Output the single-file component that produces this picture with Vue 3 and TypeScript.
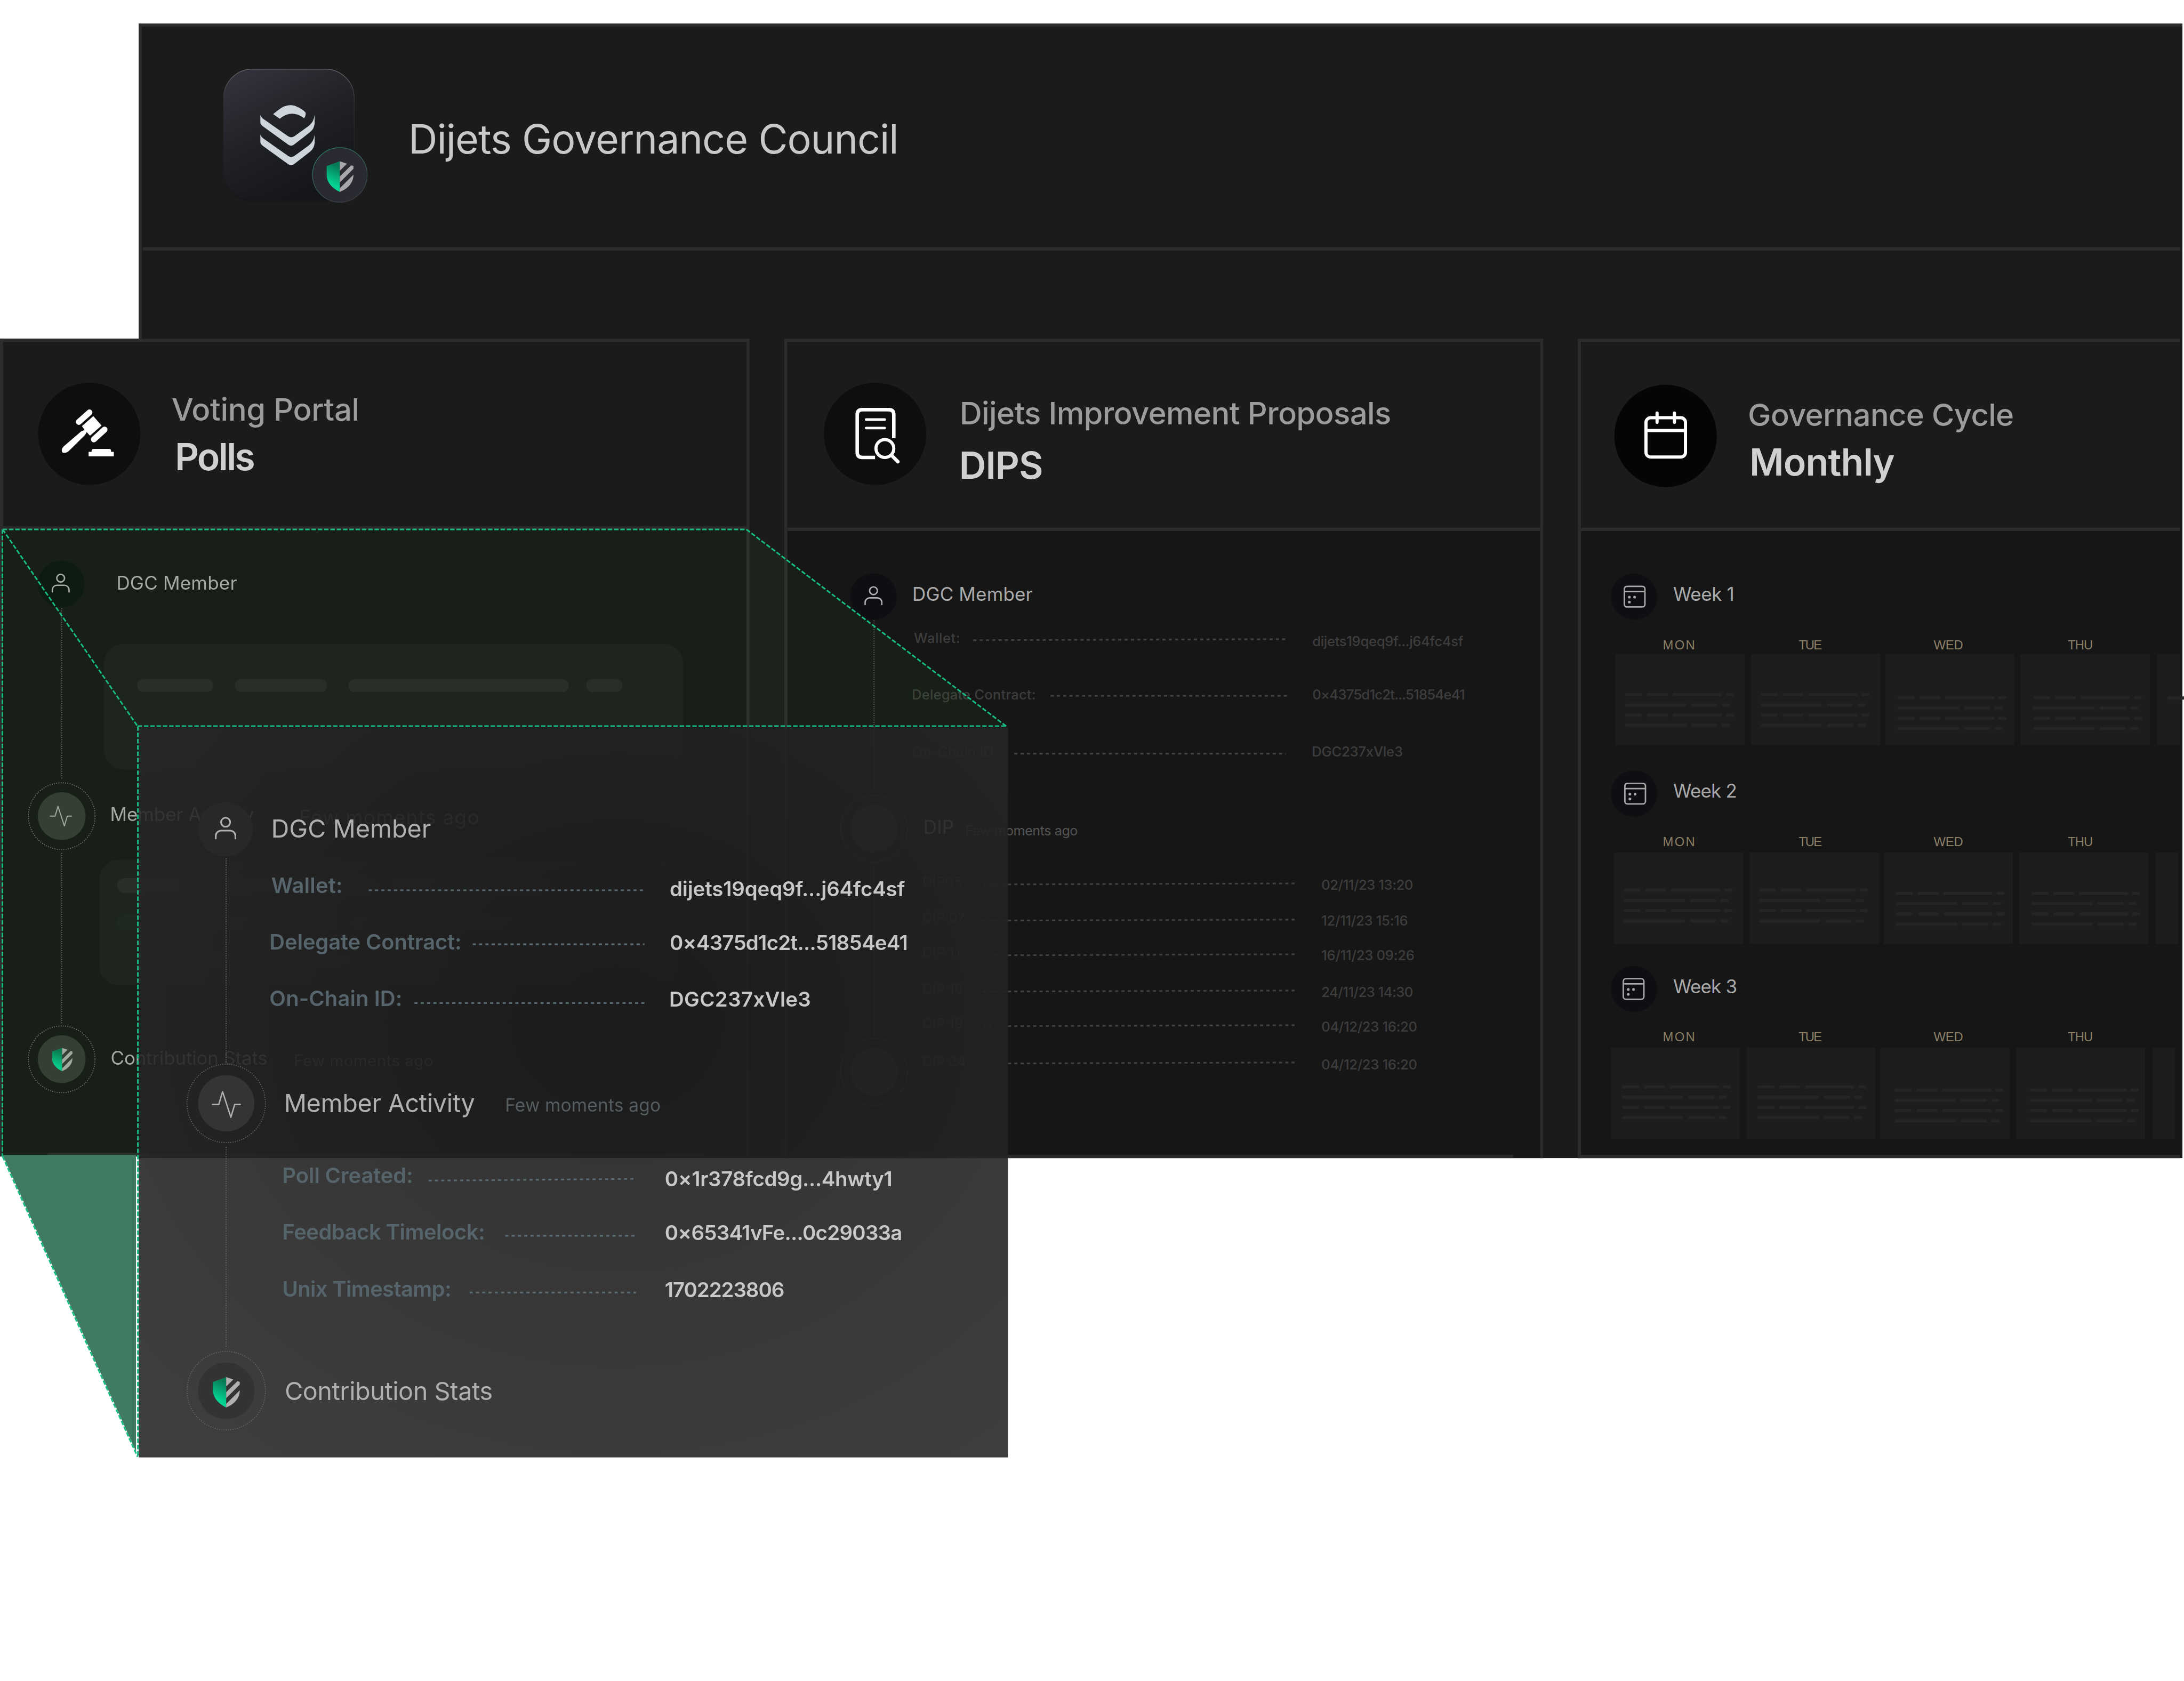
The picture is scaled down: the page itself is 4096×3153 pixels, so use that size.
<script setup lang="ts">
type Fit = HTMLElement

// Spaces the letters of a label so that its drawn width equals the bound value.
const pen = document.createElement('canvas').getContext('2d')!
function fit(el: Fit, width: number) {
  const css = getComputedStyle(el)
  pen.font = `${css.fontWeight} ${css.fontSize} ${css.fontFamily}`
  const text = (el.textContent ?? '').trim()
  const m = pen.measureText(text)
  const ink = m.actualBoundingBoxLeft + m.actualBoundingBoxRight
  el.style.letterSpacing = `${(width - ink) / Math.max(1, text.length - 1)}px`
  el.style.textIndent = `${m.actualBoundingBoxLeft}px`
}
const vFit = {
  mounted: (el: Fit, b: { value: number }) => fit(el, b.value),
}

interface Row {
  h: number
  x: number
  label: string
  w: number
  head?: boolean
  dotX?: number
  dotW?: number
  dotUp?: number
  rise?: number
  gap?: number
  value?: string
  vw?: number
  drop?: number
  note?: string
  noteX?: number
  noteW?: number
}

const proposals: Row[] = [
  { h: 80.3, x: 2, label: 'DGC Member', w: 225.6, head: true },
  { h: 108.6, x: 2, label: 'Wallet:', w: 86, dotX: 114.7, dotW: 599.8, dotUp: 5, rise: 2, gap: 47, value: 'dijets19qeq9f...j64fc4sf', vw: 286.6, drop: 6 },
  { h: 107.4, x: 0, label: 'Delegate Contract:', w: 232, dotX: 262, dotW: 455, dotUp: 8, rise: 0, gap: 44.5, value: '0×4375d1c2t...51854e41', vw: 288, drop: 0 },
  { h: 147.6, x: 0, label: 'On-Chain ID:', w: 159.7, dotX: 193, dotW: 518, dotUp: 5, rise: 0, gap: 50.5, value: 'DGC237xVle3', vw: 170, drop: 0 },
  { h: 101.4, x: 23, label: 'DIP', w: 53.5, head: true, note: 'Few moments ago', noteX: 102, noteW: 210.7 },
  { h: 68, x: 20, label: 'DIP05:', w: 81, dotX: 133, dotW: 599.7, dotUp: 5, rise: 2, gap: 46, value: '02/11/23 13:20', vw: 173, drop: 6 },
  { h: 66, x: 20, label: 'DIP 07:', w: 85, dotX: 133, dotW: 599.7, dotUp: 4, rise: 2, gap: 46, value: '12/11/23 15:16', vw: 162.5, drop: 6 },
  { h: 70, x: 20, label: 'DIP 11:', w: 76.6, dotX: 133, dotW: 599.7, dotUp: 4, rise: 2, gap: 46, value: '16/11/23 09:26', vw: 175, drop: 6 },
  { h: 66, x: 20, label: 'DIP 16:', w: 82, dotX: 133, dotW: 599.7, dotUp: 5, rise: 2, gap: 46, value: '24/11/23 14:30', vw: 173, drop: 6 },
  { h: 71.5, x: 20, label: 'DIP 19:', w: 82, dotX: 133, dotW: 599.7, dotUp: 5, rise: 2, gap: 46, value: '04/12/23 16:20', vw: 180.8, drop: 6 },
  { h: 60, x: 20, label: 'DIP 24:', w: 87, dotX: 133, dotW: 599.7, dotUp: 5, rise: 2, gap: 46, value: '04/12/23 16:20', vw: 180.8, drop: 6 },
]

const details: Row[] = [
  { h: 107, x: 20.2, label: 'DGC Member', w: 299.6, head: true },
  { h: 107.7, x: 16.5, label: 'Wallet:', w: 133, dotX: 202, dotW: 524, dotUp: 6.5, rise: 0, gap: 50, value: 'dijets19qeq9f...j64fc4sf', vw: 447, drop: 5 },
  { h: 108, x: 15, label: 'Delegate Contract:', w: 361, dotX: 400, dotW: 326, dotUp: 10.5, rise: 0, gap: 50, value: '0×4375d1c2t...51854e41', vw: 450, drop: 0 },
  { h: 200.8, x: 15, label: 'On-Chain ID:', w: 248, dotX: 289, dotW: 437, dotUp: 7, rise: 0, gap: 50, value: 'DGC237xVle3', vw: 266, drop: 0 },
  { h: 136.2, x: 44.7, label: 'Member Activity', w: 359, head: true, note: 'Few moments ago', noteX: 463.5, noteW: 293 },
  { h: 107.3, x: 39.5, label: 'Poll Created:', w: 244, dotX: 316, dotW: 394, dotUp: 5.5, rise: 3.4, gap: 56.6, value: '0×1r378fcd9g...4hwty1', vw: 430, drop: 5 },
  { h: 108.7, x: 39.5, label: 'Feedback Timelock:', w: 381, dotX: 462, dotW: 248, dotUp: 7.5, rise: 0, gap: 56.6, value: '0×65341vFe...0c29033a', vw: 449, drop: 0 },
  { h: 195.3, x: 39.5, label: 'Unix Timestamp:', w: 317, dotX: 394, dotW: 316, dotUp: 8.5, rise: 0, gap: 56.6, value: '1702223806', vw: 225, drop: 0 },
  { h: 80, x: 44, label: 'Contribution Stats', w: 392, head: true },
]

const days = [
  { name: 'MON', at: 155.8, w: 61 },
  { name: 'TUE', at: 414.3, w: 44.5 },
  { name: 'WED', at: 671.4, w: 56 },
  { name: 'THU', at: 926.7, w: 48 },
]

const weeks = [
  { name: 'Week 1', w: 114, h: 375, icon: 1, left: 66, gap: 8.8, pad: 18, pad2: 24, bar: 77.6, last: true },
  { name: 'Week 2', w: 120, h: 372, icon: 2, left: 63, gap: 11.8, pad: 18, pad2: 23.5, bar: 72, last: false },
  { name: 'Week 3', w: 120, h: 340, icon: -1, left: 57, gap: 12, pad: 21, pad2: 27, bar: 74.6, last: false },
]
const cells = [0, 258, 513, 771, 1031]
const barRows = [0, 19.5, 39, 58.5]
const longBars = [[0, 32.5], [41.4, 40], [90.2, 94], [191.6, 15.5]]
const shortBars = [[0, 117], [126, 50], [184, 15.8]]
</script>

<template>
  <div class="viewport">
    <div class="stage">
      <svg width="0" height="0" class="defs">
        <defs>
          <linearGradient id="mint" x1=".6" y1="0" x2=".4" y2="1">
            <stop offset="0.1" stop-color="#067a55" />
            <stop offset=".75" stop-color="#05d394" />
          </linearGradient>
          <symbol id="shield" viewBox="665 591 154 175">
            <path fill="url(#mint)" d="M741 591 665 619V672C668 715 700 748 741 766Z" />
            <path fill="currentColor" d="M741 591 782 605 741 645ZM741 678 806 614 819 619V634L741 712ZM741 745 819 667C819 715 785 748 741 766Z" />
          </symbol>
          <symbol id="person" viewBox="0 0 36 38">
            <g fill="none" stroke="currentColor" stroke-width="2.8" stroke-linecap="round">
              <circle cx="18" cy="9" r="7.6" />
              <path d="M1.6 36V31.5A9 9 0 0 1 10.6 23 H25.4A9 9 0 0 1 34.4 31.5V36" />
            </g>
          </symbol>
          <symbol id="pulse" viewBox="0 0 166 158">
            <path d="M3 79H39L61 5 109 153 131 79H163" fill="none" stroke="currentColor" stroke-width="8" stroke-linecap="round" stroke-linejoin="round" />
          </symbol>
        </defs>
      </svg>

      <div class="backdrop"></div>

      <header class="masthead">
        <svg class="logo" width="320" height="300" viewBox="0 0 960 900">
          <defs>
            <linearGradient id="tile" x1=".1" y1="0" x2=".6" y2="1">
              <stop offset="0" stop-color="#33333d" />
              <stop offset=".5" stop-color="#212226" />
              <stop offset="1" stop-color="#14151a" />
            </linearGradient>
            <linearGradient id="rim" x1="0" y1="0" x2="0" y2="1">
              <stop offset="0" stop-color="#68686c" />
              <stop offset=".25" stop-color="#2d2d33" />
              <stop offset="1" stop-color="#16171b" />
            </linearGradient>
            <linearGradient id="ring" x1=".2" y1="0" x2=".7" y2="1">
              <stop offset="0" stop-color="#2e7f68" />
              <stop offset="1" stop-color="#3a3b40" />
            </linearGradient>
          </defs>
          <rect x="76" y="70" width="748" height="750" rx="165" fill="#171717" />
          <rect x="77" y="65" width="746" height="748" rx="165" fill="url(#tile)" stroke="url(#rim)" stroke-width="4" />
          <path fill="#ced5db" d="M360 322 398 348Q466 292 537 345 546 335 546 316 540 302 505 284 463 259 414 282 400 289 360 322Z" />
          <path id="chevron" fill="#ced5db" d="M287 325Q290 340 304 349L448 450Q463 459 479 450L562 390Q592 368 597 326V376Q594 406 572 424L478 497Q463 507 447 497L300 390Q287 380 287 368Z" />
          <use href="#chevron" y="112" />
          <circle cx="741" cy="669" r="156" fill="#2a2a32" stroke="url(#ring)" stroke-width="4" />
          <use href="#shield" class="badge-mark" x="665" y="591" width="154" height="175" />
        </svg>
        <h1 class="t title"><span v-fit="922">Dijets Governance Council</span></h1>
      </header>

      <main class="columns">
        <section class="column polls">
          <div class="top">
            <svg class="disc" width="196" height="196" viewBox="64 84 588 588">
              <circle cx="358" cy="378" r="292" fill="#0e0e0e" />
              <g stroke="#fff" stroke-width="34" stroke-linecap="round">
                <path d="M298 310 359 256M384 410 445 354" />
              </g>
              <path fill="#fff" d="M316 334 381 277 428 331 362 389 343 368 334 384 240 477Q230 486 222 486H208Q200 484 201 468 202 460 212 450L312 364 331 356ZM354 481H371V474Q372 464 384 464H470Q482 464 482 474V481H498V507H354Z" />
            </svg>
            <div class="names">
              <p class="t kind"><span v-fit="353">Voting Portal</span></p>
              <p class="t name"><span v-fit="146">Polls</span></p>
            </div>
          </div>
          <div class="body">
            <svg class="rail" width="183" height="1180" viewBox="6 1008 183 1180">
              <g class="dotted">
                <path d="M117.5 1158V1485M117.5 1624V1950" />
                <circle cx="117.5" cy="1554" r="63.5" />
                <circle cx="117.5" cy="2017" r="63.5" />
              </g>
              <circle cx="116.5" cy="1112" r="44.3" fill="#0b110f" />
              <use href="#person" x="98" y="1088" width="35" height="45" class="mark" preserveAspectRatio="none" />
              <circle cx="117.5" cy="1554" r="45.5" fill="#363a37" />
              <use href="#pulse" x="94.5" y="1534" width="43" height="40" class="mark" />
              <circle cx="117.5" cy="2016.7" r="45.5" fill="#363a37" />
              <use href="#shield" x="99" y="1995" width="39" height="45" class="mark" />
            </svg>
            <div class="feed">
              <div class="line l1"><span class="t small x1"><span v-fit="226.3">DGC Member</span></span></div>
              <div class="card c1">
                <div class="pills">
                  <i class="p145"></i><i class="p175"></i><i class="p420"></i><i class="p70"></i>
                </div>
              </div>
              <div class="line l2">
                <span class="t small x2"><span v-fit="270">Member Activity</span></span>
                <span class="t ago big"><span v-fit="338">Few moments ago</span></span>
              </div>
              <div class="card c2">
                <div class="pills"><i class="q122"></i><i class="q350"></i><i class="q300"></i></div>
                <div class="pills dim"><i class="q420"></i><i class="q120"></i><i class="q330"></i></div>
                <div class="pills dim shifted"><i class="q142"></i><i class="q240"></i><i class="q125"></i></div>
              </div>
              <div class="line l3">
                <span class="t small x2"><span v-fit="295">Contribution Stats</span></span>
                <span class="t ago"><span v-fit="262">Few moments ago</span></span>
              </div>
            </div>
          </div>
        </section>

        <section class="column dips">
          <div class="top">
            <svg class="disc" width="196" height="196" viewBox="52 55 588 588">
              <circle cx="346" cy="349" r="292" fill="#0e0e0e" />
              <g fill="none" stroke="#fff">
                <path stroke-width="20" d="M453 374V240Q453 211 424 211H273Q244 211 244 240V455Q244 484 273 484H346" />
                <path stroke-width="15" stroke-linecap="round" d="M295 268H401M295 316H401" />
                <circle stroke-width="18" cx="402" cy="433" r="51" />
                <path stroke-width="20" stroke-linecap="round" d="M442 474 476 508" />
              </g>
            </svg>
            <div class="names">
              <p class="t kind"><span v-fit="816">Dijets Improvement Proposals</span></p>
              <p class="t name"><span v-fit="152">DIPS</span></p>
            </div>
          </div>
          <div class="body">
            <svg class="rail" width="239" height="1180" viewBox="1499 1011 239 1180">
              <g class="dotted">
                <path d="M1664 1181V1506M1664 1649V1972" />
                <circle cx="1664" cy="1577.8" r="63.5" />
                <circle cx="1664" cy="2040.8" r="63.5" />
              </g>
              <circle cx="1663" cy="1136" r="44.3" fill="#0d0f12" />
              <use href="#person" x="1645.5" y="1112" width="35" height="45" class="mark" preserveAspectRatio="none" />
              <circle cx="1664" cy="1577.8" r="45.5" fill="#323436" />
              <circle cx="1664" cy="2040.8" r="45.5" fill="#323436" />
            </svg>
            <div class="rows">
              <div v-for="r in proposals" :key="r.label" class="row" :style="{ height: r.h + 'px', paddingLeft: r.x + 'px' }">
                <span class="t label" :class="{ head: r.head }" :style="{ width: (r.head ? (r.noteX ?? 400) : r.dotX!) - r.x + 'px' }"><span v-fit="r.w">{{ r.label }}</span></span>
                <template v-if="!r.head">
                  <svg class="dots" :width="r.dotW" height="12" :style="{ marginTop: 34 - r.dotUp! + 'px' }">
                    <line x1="0" y1="6" :x2="r.dotW! - 1" :y2="6 - r.rise!" />
                  </svg>
                  <span class="t value" :style="{ paddingLeft: r.gap + 'px', paddingTop: r.drop + 'px' }"><span v-fit="r.vw!">{{ r.value }}</span></span>
                </template>
                <span v-if="r.note" class="t note"><span v-fit="r.noteW!">{{ r.note }}</span></span>
              </div>
            </div>
          </div>
        </section>

        <section class="column cycle">
          <div class="top">
            <svg class="disc" width="196" height="196" viewBox="3072.5 731.5 196 196">
              <circle cx="3170.5" cy="829.5" r="97.5" fill="#050505" />
              <g fill="none" stroke="#fff" stroke-width="6">
                <rect x="3133.2" y="794.8" width="75.2" height="75" rx="9" />
                <path d="M3133 819.3H3208" />
                <path d="M3154.3 786V803.5M3187.4 786V803.5" stroke-linecap="round" />
              </g>
            </svg>
            <div class="names">
              <p class="t kind"><span v-fit="501">Governance Cycle</span></p>
              <p class="t name"><span v-fit="271">Monthly</span></p>
            </div>
          </div>
          <div class="weeks">
            <div v-for="k in weeks" :key="k.name" class="week" :style="{ height: k.h + 'px' }">
              <div class="week-head">
                <svg width="88" height="88" viewBox="0 0 88 88">
                  <circle cx="44" cy="44" r="44" fill="#0d0f12" />
                  <g fill="none" stroke="#a9a9a9" stroke-width="2.8" :transform="`translate(${k.icon - 1} 0)`">
                    <rect x="25.5" y="24.5" width="39.2" height="39.2" rx="5" />
                    <path d="M25.5 34.4H64.7" />
                    <g fill="#a9a9a9" stroke="none">
                      <circle cx="35" cy="45" r="2.6" /><circle cx="45" cy="45" r="2.6" /><circle cx="35" cy="54.3" r="2.6" />
                    </g>
                  </g>
                </svg>
                <span class="t week-name"><span v-fit="k.w">{{ k.name }}</span></span>
              </div>
              <svg class="days" width="1148" height="56">
                <text v-for="d in days" :key="d.name" :x="d.at" y="56" :textLength="d.w">{{ d.name }}</text>
              </svg>
              <svg class="cells" width="1148" height="174" :style="{ marginTop: k.gap + 'px' }">
                <g v-for="(c, i) in cells" :key="c" :transform="`translate(${c + k.left} 0)`">
                  <rect class="cell" :width="i === 4 ? 43 : 246" height="174" />
                  <g v-if="i < 4" :transform="`translate(${i > 1 ? k.pad2 : k.pad} ${k.bar - 3 + (i > 1 ? 6 : 0)})`">
                    <template v-for="(y, j) in barRows" :key="y">
                      <rect v-for="b in j % 2 ? shortBars : longBars" :key="b[0]" class="bar" :x="b[0]" :y="y" :width="b[1]" height="6" rx="3" />
                    </template>
                  </g>
                  <rect v-else-if="k.last" class="bar" x="19" y="81" width="34" height="6" rx="3" />
                </g>
              </svg>
            </div>
          </div>
        </section>
      </main>

      <svg class="layer" width="4158" height="3201">
        <path d="M3 1008H1421L1916 1383H262V2199H3Z" fill="#35712b" fill-opacity=".1" />
        <path d="M5 2199H259V2764Z" fill="#407a60" />
      </svg>

      <aside class="panel">
        <svg class="rail" width="236" height="1390" viewBox="264 1385 236 1390">
          <g class="dotted">
            <path d="M430.5 1634V2024M430.5 2184V2568" />
            <circle cx="430.7" cy="2101" r="74.7" />
            <circle cx="430.7" cy="2648" r="74.7" />
          </g>
          <circle cx="429" cy="1579" r="52" fill="#282828" />
          <use href="#person" x="409" y="1551" width="41" height="52" class="mark" preserveAspectRatio="none" />
          <circle cx="430.7" cy="2100.7" r="53.7" fill="#343434" />
          <use href="#pulse" x="403" y="2077" width="56" height="52" class="mark" />
          <circle cx="430.7" cy="2648" r="53.7" fill="#333" />
          <use href="#shield" x="405" y="2622" width="52" height="58" class="mark" />
        </svg>
        <div class="rows">
          <div v-for="r in details" :key="r.label" class="row" :style="{ height: r.h + 'px', paddingLeft: r.x + 'px' }">
            <span class="t label" :class="{ head: r.head }" :style="{ width: (r.head ? (r.noteX ?? 600) : r.dotX!) - r.x + 'px' }"><span v-fit="r.w">{{ r.label }}</span></span>
            <template v-if="!r.head">
              <svg class="dots" :width="r.dotW" height="12" :style="{ marginTop: 34 - r.dotUp! + 'px' }">
                <line x1="0" y1="6" :x2="r.dotW! + 1" :y2="6 - r.rise!" />
              </svg>
              <span class="t value" :style="{ paddingLeft: r.gap + 'px', paddingTop: r.drop + 'px' }"><span v-fit="r.vw!">{{ r.value }}</span></span>
            </template>
            <span v-if="r.note" class="t note"><span v-fit="r.noteW!">{{ r.note }}</span></span>
          </div>
        </div>
      </aside>

      <svg class="layer" width="4158" height="3201">
        <path class="trace" d="M5 1008H1421M1421 1008 1916 1383M5 1008 262 1383M262 1382.5H1916M262.5 1383V2774M4.5 1008V2202M5 2202 262 2774" />
      </svg>
    </div>
  </div>
</template>

<style>
body {
  background: #fff;
}
</style>

<style scoped>
.viewport {
  width: 4096px;
  height: 3153px;
  overflow: hidden;
}
.stage {
  position: relative;
  width: 4158px;
  height: 3201px;
  transform: scale(0.98509);
  transform-origin: 0 0;
  font-family: Inter, 'Noto Sans', sans-serif;
  overflow: hidden;
}
.defs {
  position: absolute;
}
.backdrop {
  position: absolute;
  left: 264px;
  top: 45px;
  width: 3891px;
  height: 2160px;
  box-sizing: border-box;
  background: #1b1b1b;
  border-top: 6px solid #2c2c2c;
  border-left: 6px solid #2c2c2c;
}
.t {
  display: block;
  margin: 0;
  line-height: 1;
  white-space: nowrap;
  font-weight: 400;
}
.t > span {
  display: inline-block;
}
.masthead {
  position: relative;
  display: flex;
  align-items: flex-start;
  box-sizing: border-box;
  height: 477px;
  margin-right: 8px;
  margin-left: 272px;
  padding: 110px 0 0 128px;
  border-bottom: 6px solid #2c2c2c;
}
.badge-mark {
  color: #a8a8ac;
}
.title {
  margin-top: calc(181.6px - 0.864em);
  margin-left: 63.6px;
  font-size: 76.5px;
  color: #c9c9c9;
}
.columns {
  position: relative;
  display: flex;
  gap: 66px;
  height: 1560px;
  margin-top: 168px;
}
.column {
  flex: none;
  box-sizing: border-box;
  border: 6px solid #2c2c2c;
  border-bottom: 0;
  background: #161616;
}
.polls {
  width: 1427px;
  height: 1557px;
}
.dips {
  width: 1445px;
}
.cycle {
  width: 1146px;
  border-right: 0;
  border-bottom: 6px solid #2c2c2c;
}
.top {
  display: flex;
  align-items: flex-start;
  box-sizing: border-box;
  height: 360px;
  padding: 77px 0 0 69px;
  border-bottom: 6px solid #2c2c2c;
  background: #1b1b1b;
}
.polls .top {
  height: 357px;
  padding-left: 65.5px;
}
.cycle .top {
  padding: 80.5px 0 0 62.5px;
}
.disc {
  flex: none;
}
.names {
  margin-left: 67px;
}
.polls .names {
  margin-left: 60px;
}
.cycle .names {
  margin-left: 62.2px;
}
.kind {
  height: 74px;
  padding-top: calc(73.2px - 0.864em);
  box-sizing: border-box;
  font-size: 59px;
  font-weight: 500;
  color: #9c9c9c;
}
.dips .kind {
  padding-top: calc(80px - 0.864em);
}
.cycle .kind {
  padding-top: calc(79.5px - 0.864em);
}
.name {
  margin-top: calc(93px - 0.864em);
  font-size: 71px;
  font-weight: 600;
  color: #d0d0d0;
}
.polls .name {
  margin-left: 10.5px;
}
.dips .name {
  margin-top: calc(110.8px - 0.864em);
}
.cycle .name {
  margin-top: calc(101.3px - 0.864em);
  margin-left: 5px;
}
.body {
  display: flex;
}
.rail {
  flex: none;
  display: block;
  overflow: visible;
}
.dotted {
  fill: none;
  stroke: #777;
  stroke-width: 1.7;
  stroke-dasharray: 1.8 2.5;
}
.mark {
  color: #b0b0b0;
}
.feed {
  width: 1232px;
  padding-top: 74.6px;
}
.line {
  display: flex;
}
.line .t {
  margin-top: calc(41px - 0.864em);
}
.l1 {
  height: 143.8px;
}
.l2 {
  height: 114.5px;
  margin-top: 58px;
}
.l3 {
  margin-top: 111px;
}
.small {
  font-size: 35.5px;
  color: #b0b0b0;
}
.x1 {
  padding-left: 35.7px;
}
.x2 {
  width: 349px;
  padding-left: 23.7px;
}
.ago {
  font-size: 30px;
  color: #6e6e6e;
}
.line .ago {
  padding-top: 2px;
}
.line .big {
  padding-top: 5px;
  padding-left: 11px;
  font-size: 37.5px;
}
.card {
  box-sizing: border-box;
  width: 1103px;
  height: 238.6px;
  border-radius: 37px;
  background: #1c1c1c;
}
.c1 {
  margin-left: 9px;
  padding: 66.6px 0 0 63px;
}
.c2 {
  padding: 34.5px 0 0 34px;
}
.pills {
  display: flex;
  gap: 40.5px;
  margin-bottom: 43px;
}
.pills i {
  display: block;
  height: 25px;
  border-radius: 13px;
  background: #262727;
}
.c2 .pills {
  gap: 25px;
}
.c2 i {
  height: 28px;
}
.c2 .dim i {
  background: #1d2120;
}
.c2 .shifted {
  padding-left: 70px;
}
.p145 { width: 145px; }
.p175 { width: 176px; }
.p420 { width: 420px; }
.p70 { width: 69.5px; margin-left: -8px; }
.q122 { width: 122px; }
.q350 { width: 350px; }
.q300 { width: 300px; }
.q420 { width: 420px; }
.q120 { width: 120px; }
.q330 { width: 333px; }
.q142 { width: 142px; }
.q240 { width: 240px; }
.q125 { width: 125px; }
.dips {
  position: relative;
}
.dips::after {
  content: '';
  position: absolute;
  left: 102px;
  bottom: 0;
  width: 1280px;
  height: 6px;
  background: #2a2a2a;
}
.polls {
  position: relative;
}
.polls::after {
  content: '';
  position: absolute;
  left: 84px;
  bottom: 0;
  width: 1253px;
  height: 6px;
  background: #2c2c2c;
}
.dips .rows {
  padding-top: 92.7px;
}
.row {
  display: flex;
  align-items: flex-start;
  box-sizing: border-box;
}
.row .t {
  flex: none;
  margin-top: calc(40px - 0.864em);
}
.dots {
  flex: none;
  overflow: visible;
}
.dots line {
  stroke: #404040;
  stroke-width: 3.2;
  stroke-dasharray: 6 6;
}
.label,
.value {
  font-size: 26px;
  font-weight: 500;
  color: #3d3d3d;
}
.row .head {
  margin-top: calc(40.8px - 0.864em);
  font-size: 35.5px;
  font-weight: 400;
  color: #aaa;
}
.note {
  padding-top: 3px;
  font-size: 25.5px;
  color: #545454;
}
.weeks {
  padding-top: 81px;
}
.week-head {
  display: flex;
  align-items: flex-start;
  height: 88px;
  padding-left: 57px;
}
.week-name {
  margin-top: calc(53px - 0.864em);
  margin-left: 30.5px;
  font-size: 35.5px;
  color: #aaa;
}
.days,
.cells {
  display: block;
  overflow: visible;
}
.days text {
  font-family: 'Liberation Sans', sans-serif;
  font-size: 24.2px;
  fill: #8b8067;
}
.cell {
  fill: #1d1d1d;
}
.bar {
  fill: #252525;
}
.layer {
  position: absolute;
  left: 0;
  top: 0;
}
.trace {
  fill: none;
  stroke: #17bd82;
  stroke-width: 3;
  stroke-dasharray: 8.5 3.5;
}
.panel {
  position: absolute;
  left: 264px;
  top: 1385px;
  display: flex;
  width: 1655px;
  height: 1390px;
  background: radial-gradient(ellipse 1150px 1000px at 55% 40%, rgba(28, 28, 28, 0.9), rgba(34, 34, 34, 0.9) 55%, rgba(40, 40, 40, 0.9) 100%);
}
.panel .rows {
  padding-top: 169px;
}
.panel .label {
  font-size: 40.5px;
  font-weight: 600;
  color: #56646c;
}
.panel .value {
  font-size: 39px;
  font-weight: 600;
  color: #c8c8c8;
}
.panel .head {
  font-size: 47.5px;
  font-weight: 400;
  color: #b0b0b0;
}
.panel .note {
  padding-top: 0;
  font-size: 34px;
  color: #555c60;
}
.panel .dots line {
  stroke: #5a6a72;
}
.panel .dotted {
  stroke: #666;
}
</style>
